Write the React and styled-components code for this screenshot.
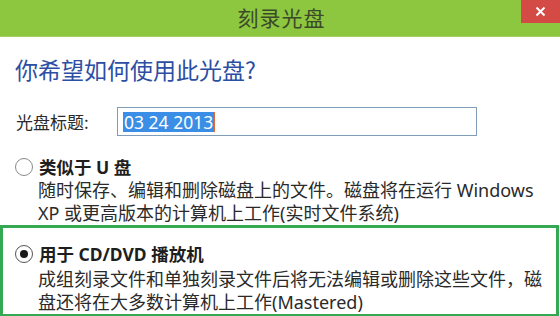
import React from "react"
import styled, { createGlobalStyle } from "styled-components"

const GlobalStyle = createGlobalStyle`
  html, body {
    margin: 0;
    padding: 0;
    background: #ffffff;
  }
  body {
    font-family: "Noto Sans", "Noto Sans CJK SC", sans-serif;
    color: #222;
  }
`

const Window = styled.div`
  width: 560px;
  height: 316px;
  overflow: hidden;
  display: flex;
  flex-direction: column;
  background: #fff;
`

const TitleBar = styled.div`
  height: 36px;
  flex: none;
  display: grid;
  grid-template-columns: 1fr auto 1fr;
  background: #8dc63f;
  border-bottom: 1px solid #a3d05e;
`

const Title = styled.div`
  grid-column: 2;
  font-family: "Noto Sans CJK SC", sans-serif;
  font-size: 21px;
  line-height: 34px;
  color: #3b4a2a;
  letter-spacing: 1px;
  padding-left: 3px;
`

const CloseButton = styled.div`
  grid-column: 3;
  justify-self: end;
  align-self: start;
  width: 39px;
  height: 23px;
  background: #d44a44;
  display: flex;
  align-items: center;
  justify-content: center;
`

const Body = styled.div`
  display: flex;
  flex-direction: column;
`

const Heading = styled.h1`
  margin: 17px 0 0 15px;
  font-family: "Noto Sans CJK SC", sans-serif;
  font-weight: 400;
  font-size: 23px;
  line-height: 31px;
  color: #2c4ea3;
`

const FieldRow = styled.div`
  display: flex;
  align-items: center;
  margin: 22px 0 0 16px;
`

const Label = styled.span`
  width: 101px;
  font-family: "Noto Sans CJK SC", sans-serif;
  font-size: 17px;
  line-height: 29px;
  color: #2a2a2a;
`

const TextBox = styled.div`
  width: 353px;
  height: 27px;
  border: 1px solid #7f9db9;
  display: flex;
  align-items: center;
  padding-left: 5px;
  box-sizing: content-box;
`

const Selected = styled.span`
  background: #3a8ee6;
  color: #fff;
  font-family: "Noto Sans", sans-serif;
  font-size: 17.5px;
  line-height: 20px;
  padding: 0 1px;
  border-right: 1px solid #e06a3a;
`

const Option = styled.div`
  margin: ${(p) => (p.$first ? "2px" : "0")} 1px 0 0;
  padding: 14px 0 0 12px;
  border: 3px solid ${(p) => (p.$active ? "#34a853" : "transparent")};
  border-bottom: ${(p) => (p.$active ? "3px solid #34a853" : "0")};
`

const OptionRow = styled.div`
  display: flex;
  align-items: center;
  gap: 6px;
  height: 24px;
  margin-bottom: ${(p) => (p.$loose ? "2px" : "0")};
`

const Radio = styled.span`
  width: 16px;
  height: 16px;
  border-radius: 50%;
  border: 1px solid ${(p) => (p.$checked ? "#555" : "#8a8a8a")};
  background: #fff;
  display: flex;
  align-items: center;
  justify-content: center;
  flex: none;
  &::after {
    content: "";
    width: 8px;
    height: 8px;
    border-radius: 50%;
    background: ${(p) => (p.$checked ? "#1a1a1a" : "transparent")};
  }
`

const OptionTitle = styled.span`
  font-family: "Noto Sans", "Noto Sans CJK SC", sans-serif;
  font-weight: 700;
  font-size: 17.5px;
  line-height: 24px;
  color: #1e1e1e;
`

const Desc = styled.p`
  margin: 0 0 0 23px;
  font-family: "Noto Sans", "Noto Sans CJK SC", sans-serif;
  font-size: 18px;
  line-height: 23px;
  color: #2a2a2a;
`

const CloseIcon = () => (
  <svg width="11" height="11" viewBox="0 0 11 11">
    <path d="M1.5 1.5 L9.5 9.5 M9.5 1.5 L1.5 9.5" stroke="#fff" strokeWidth="2" />
  </svg>
)

export default function App() {
  return (
    <>
      <GlobalStyle />
      <Window>
        <TitleBar>
          <Title>刻录光盘</Title>
          <CloseButton>
            <CloseIcon />
          </CloseButton>
        </TitleBar>
        <Body>
          <Heading>你希望如何使用此光盘?</Heading>
          <FieldRow>
            <Label>光盘标题:</Label>
            <TextBox>
              <Selected>03 24 2013</Selected>
            </TextBox>
          </FieldRow>
          <Option $first>
            <OptionRow>
              <Radio />
              <OptionTitle>类似于 U 盘</OptionTitle>
            </OptionRow>
            <Desc>
              随时保存、编辑和删除磁盘上的文件。磁盘将在运行 Windows
              <br />
              XP 或更高版本的计算机上工作(实时文件系统)
            </Desc>
          </Option>
          <Option $active>
            <OptionRow $loose>
              <Radio $checked />
              <OptionTitle>用于 CD/DVD 播放机</OptionTitle>
            </OptionRow>
            <Desc>
              成组刻录文件和单独刻录文件后将无法编辑或删除这些文件，磁
              <br />
              盘还将在大多数计算机上工作(Mastered)
            </Desc>
          </Option>
        </Body>
      </Window>
    </>
  )
}
